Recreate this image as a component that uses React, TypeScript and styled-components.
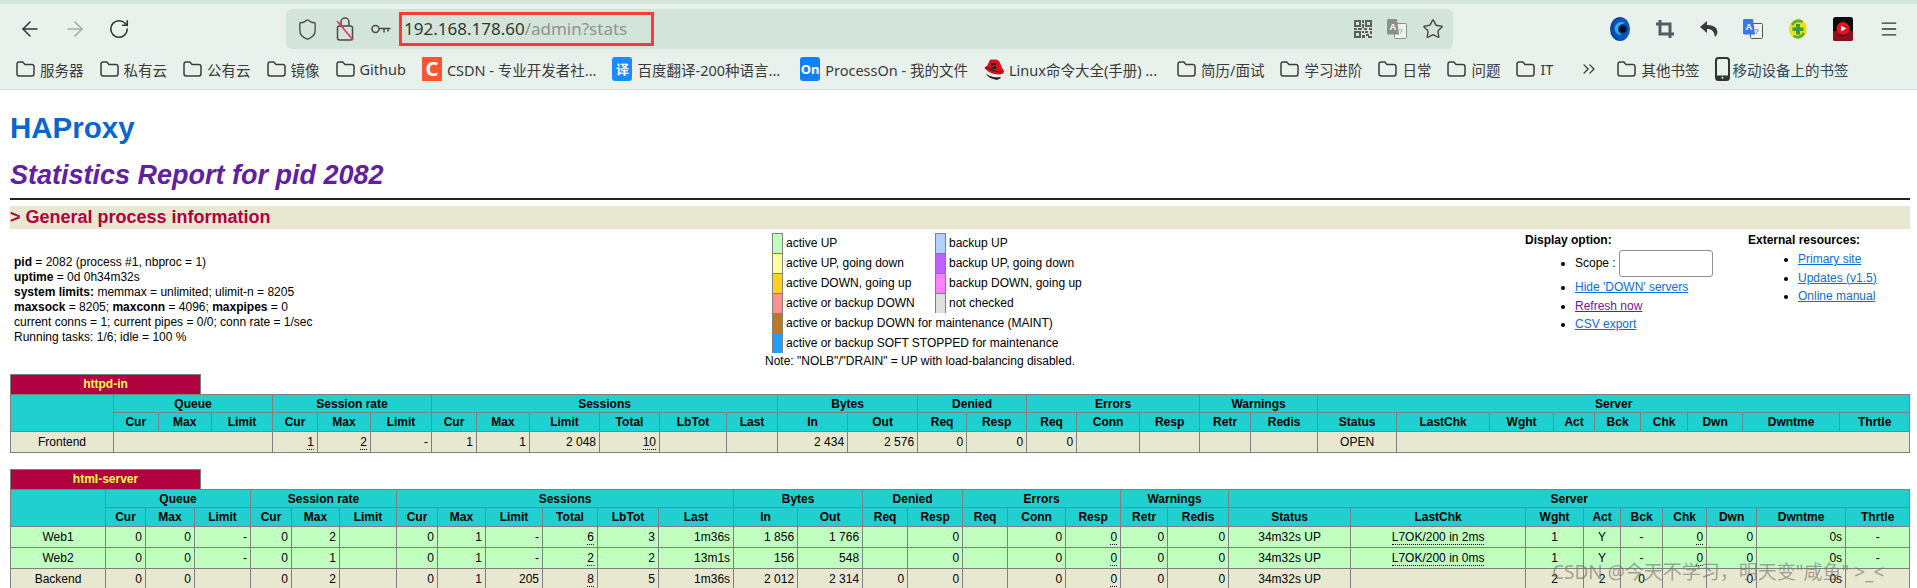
import { ReactNode } from "react";
import styled, { createGlobalStyle } from "styled-components";
import {
  ArrowLeft,
  ArrowRight,
  ChevronsRight,
  Menu,
  RotateCw,
  Shield,
  Star,
} from "lucide-react";

const GlobalStyle = createGlobalStyle`
  html, body {
    margin: 0;
    padding: 0;
    background: #fff;
    height: 588px;
    overflow: hidden;
  }
`;

type Cell = string | { t?: string; u?: boolean; c?: boolean; span?: number };

const groups: [string, number][] = [
  ["Queue", 3],
  ["Session rate", 3],
  ["Sessions", 6],
  ["Bytes", 2],
  ["Denied", 2],
  ["Errors", 3],
  ["Warnings", 2],
  ["Server", 9],
];

const subHeads = [
  "Cur", "Max", "Limit", "Cur", "Max", "Limit", "Cur", "Max", "Limit", "Total", "LbTot", "Last",
  "In", "Out", "Req", "Resp", "Req", "Conn", "Resp", "Retr", "Redis",
  "Status", "LastChk", "Wght", "Act", "Bck", "Chk", "Dwn", "Dwntme", "Thrtle",
];

const frontendEdges = [
  10.5, 113.5, 158, 211.5, 272.5, 317.5, 370.5, 431.5, 476.5, 529.5, 599.5, 659.5, 726.5, 777.5,
  847.5, 917.5, 966.5, 1026.5, 1076.5, 1139.5, 1199.5, 1250.5, 1317.5, 1396.5, 1489.5, 1553.5,
  1594.5, 1640.5, 1687.5, 1742.5, 1839.5, 1909.5,
];

const backendEdges = [
  10.5, 105.5, 145.5, 194.5, 250.5, 291.5, 339.5, 396.5, 437.5, 485.5, 542.5, 597.5, 658.5, 733.5,
  797.5, 862.5, 907.5, 962.5, 1007.5, 1065.5, 1120.5, 1167.5, 1228.5, 1350.5, 1525.5, 1583.5,
  1620.5, 1662.5, 1706.5, 1756.5, 1845.5, 1909.5,
];

const frontendRows: { kind: "front" | "active"; cells: Cell[] }[] = [
  {
    kind: "front",
    cells: [
      { t: "Frontend", c: true },
      { span: 3 },
      { t: "1", u: true }, { t: "2", u: true }, "-",
      "1", "1", "2 048", { t: "10", u: true }, "", "",
      "2 434", "2 576",
      "0", "0",
      "0", "", "",
      "", "",
      { t: "OPEN", c: true },
      { span: 8 },
    ],
  },
];

const backendRows: { kind: "front" | "active"; cells: Cell[] }[] = [
  {
    kind: "active",
    cells: [
      { t: "Web1", c: true },
      "0", "0", "-",
      "0", "2", "",
      "0", "1", "-", { t: "6", u: true }, "3", "1m36s",
      "1 856", "1 766",
      "", "0",
      "", "0", { t: "0", u: true },
      "0", "0",
      { t: "34m32s UP", c: true }, { t: "L7OK/200 in 2ms", c: true, u: true },
      { t: "1", c: true }, { t: "Y", c: true }, { t: "-", c: true },
      { t: "0", u: true }, "0", "0s", { t: "-", c: true },
    ],
  },
  {
    kind: "active",
    cells: [
      { t: "Web2", c: true },
      "0", "0", "-",
      "0", "1", "",
      "0", "1", "-", { t: "2", u: true }, "2", "13m1s",
      "156", "548",
      "", "0",
      "", "0", { t: "0", u: true },
      "0", "0",
      { t: "34m32s UP", c: true }, { t: "L7OK/200 in 0ms", c: true, u: true },
      { t: "1", c: true }, { t: "Y", c: true }, { t: "-", c: true },
      { t: "0", u: true }, "0", "0s", { t: "-", c: true },
    ],
  },
  {
    kind: "front",
    cells: [
      { t: "Backend", c: true },
      "0", "0", "",
      "0", "2", "",
      "0", "1", "205", { t: "8", u: true }, "5", "1m36s",
      "2 012", "2 314",
      "0", "0",
      "", "0", { t: "0", u: true },
      "0", "0",
      { t: "34m32s UP", c: true }, { t: "", c: true },
      { t: "2", c: true }, { t: "2", c: true }, { t: "0", c: true },
      "", "0", "0s", "",
    ],
  },
];

const legendLeft: [string, string][] = [
  ["#c0ffc0", "active UP"],
  ["#ffffa0", "active UP, going down"],
  ["#ffd020", "active DOWN, going up"],
  ["#ff9090", "active or backup DOWN"],
];

const legendRight: [string, string][] = [
  ["#b0d0ff", "backup UP"],
  ["#c060ff", "backup UP, going down"],
  ["#ff80ff", "backup DOWN, going up"],
  ["#e0e0e0", "not checked"],
];

const FolderIcon = () => (
  <svg width="19" height="18" viewBox="0 0 19 18" fill="none" stroke="#3c3c3c" strokeWidth="1.5">
    <path d="M1 4.2C1 2.9 1.9 2 3.2 2h3.6l2.2 2.4h6.8c1.3 0 2.2.9 2.2 2.2v7.2c0 1.3-.9 2.2-2.2 2.2H3.2C1.9 16 1 15.1 1 13.8z" />
  </svg>
);

const LockOff = () => (
  <svg width="18" height="26" viewBox="0 0 18 26" fill="none">
    <path d="M5 10V6a4 4 0 0 1 8 0v4" stroke="#4a4a4a" strokeWidth="1.5" />
    <rect x="1.5" y="10" width="15" height="14" rx="2" stroke="#4a4a4a" strokeWidth="1.5" />
    <path d="M1 5l16 19" stroke="#f0325a" strokeWidth="1.6" />
  </svg>
);

const KeyIcon = () => (
  <svg width="20" height="10" viewBox="0 0 20 10" fill="none" stroke="#4a4a4a" strokeWidth="1.5">
    <circle cx="4.5" cy="5" r="3.5" />
    <path d="M8 4.5h11.5M13 4.5v4M17 4.5v3" />
  </svg>
);

const QrIcon = () => (
  <svg width="18" height="18" viewBox="0 0 18 18" fill="#5a5f5c">
    <path fillRule="evenodd" d="M0 0h7v7H0zM2 2v3h3V2zM11 0h7v7h-7zM13 2v3h3V2zM0 11h7v7H0zM2 13v3h3v-3z" />
    <path d="M8 0h2v3H8zM8 4h2v4H8zM0 8h3v2H0zM4 8h4v2H4zM10 8h3v2h-3zM15 8h3v2h-3zM8 11h2v2H8zM11 11h3v2h-3zM16 11h2v3h-2zM8 15h3v3H8zM12 14h3v2h-3zM14 16h4v2h-4z" />
  </svg>
);

const TranslateIcon = ({ front, back }: { front: string; back: string }) => (
  <svg width="20" height="20" viewBox="0 0 20 20">
    <rect x="7.5" y="4.5" width="12" height="15" rx="1" fill="#eef2f0" stroke={back} />
    <text x="13.5" y="15" fontSize="8" fontFamily="Liberation Sans" fill={back} textAnchor="middle">
      ?
    </text>
    <path d="M1.5 0h8.5l2 15.5H1.5c-.8 0-1.5-.7-1.5-1.5V1.5C0 .7.7 0 1.5 0z" fill={front} />
    <text x="6" y="11" fontSize="9.5" fontWeight="700" fontFamily="Liberation Sans" fill="#fff" textAnchor="middle">
      A
    </text>
  </svg>
);

const SwirlIcon = () => (
  <svg width="20" height="24" viewBox="0 0 20 24">
    <defs>
      <radialGradient id="swirl" cx="60%" cy="50%" r="60%">
        <stop offset="0" stopColor="#02133a" />
        <stop offset="0.55" stopColor="#0a5fc4" />
        <stop offset="1" stopColor="#063a8c" />
      </radialGradient>
    </defs>
    <ellipse cx="10" cy="12" rx="10" ry="12" fill="url(#swirl)" />
    <path d="M15 6c-6-3-11 2-10 7 1 4 5 6 8 4-3 0-5-2-5-5s3-5 7-6z" fill="#3fa8ee" />
    <circle cx="13" cy="12" r="3.5" fill="#03112f" />
  </svg>
);

const CropIcon = () => (
  <svg width="18" height="18" viewBox="0 0 18 18" fill="none" stroke="#5b5866" strokeWidth="3">
    <path d="M4 0v14h14M0 4h14v14" />
  </svg>
);

const UndoIcon = () => (
  <svg width="18" height="18" viewBox="0 0 18 18">
    <path d="M7 1L0 7l7 6V9c4 0 7 1 8 8 3-3 3-6 1-9-2-2-5-3-9-3z" fill="#3a3a3a" />
  </svg>
);

const GuardIcon = () => (
  <svg width="18" height="20" viewBox="0 0 18 20">
    <ellipse cx="9" cy="10" rx="9" ry="10" fill="#e9e020" />
    <path d="M2 5a9 10 0 0 1 12-3l-1 2A7 8 0 0 0 4 7z" fill="#58b030" />
    <path d="M16 15a9 10 0 0 1-12 3l1-2a7 8 0 0 0 9-3z" fill="#58b030" />
    <path d="M7 5h4v3.500h3.500v3.500H11v3.500H7V12H3.500V8.500H7z" fill="#3c9a3c" />
  </svg>
);

const MusicIcon = () => (
  <svg width="20" height="24" viewBox="0 0 20 24">
    <rect width="20" height="24" rx="2.500" fill="#0b0b0b" />
    <path d="M0 14h5a5 5 0 0 0 10 0h5v7.500A2.500 2.500 0 0 1 17.500 24h-15A2.500 2.500 0 0 1 0 21.500z" fill="#8c0f1c" />
    <circle cx="10" cy="11.500" r="6.500" fill="#e8101e" />
    <path d="M8 8.500l5 3-5 3z" fill="#fff" />
  </svg>
);

const RedHatIcon = () => (
  <svg width="20" height="22" viewBox="0 0 20 22">
    <path d="M2 15c2 3 8 5 14 4l1 1-4 2c-5-1-10-3-11-7z" fill="#222" />
    <path d="M6 2c2-1 3 0 5-.5 3-.5 5 2 6 6 1 3 3 4 3 6s-2 3-5 3-9-1-12-4C1 11 0 10 1 9l2-1z" fill="#d6101c" />
    <path d="M2 9c3 3 8 4 14 5 1 0 2-1 1.500-2" stroke="#222" strokeWidth="1" fill="none" />
    <path d="M7 5h5v2H9v1h3v3H7V9h3V8H7z" fill="#222" />
  </svg>
);

const PhoneIcon = () => (
  <svg width="15" height="24" viewBox="0 0 15 24">
    <rect x="1" y="1" width="13" height="22" rx="2.500" fill="none" stroke="#333" strokeWidth="2" />
    <rect x="1" y="18.500" width="13" height="4.500" fill="#333" />
    <circle cx="7.500" cy="20.700" r="1" fill="#e8f1ec" />
  </svg>
);

const Statline = ({ children }: { children: ReactNode }) => <div>{children}</div>;

const StatsTable = ({
  edges,
  rows,
}: {
  edges: number[];
  rows: { kind: "front" | "active"; cells: Cell[] }[];
}) => (
  <Tbl>
    <colgroup>
      {edges.slice(1).map((edge, i) => (
        <col key={i} style={{ width: edge - edges[i] }} />
      ))}
    </colgroup>
    <thead>
      <GroupRow>
        <Th rowSpan={2} />
        {groups.map(([name, span]) => (
          <Th key={name} colSpan={span}>
            {name}
          </Th>
        ))}
      </GroupRow>
      <SubRow>
        {subHeads.map((name, i) => (
          <Th key={i}>{name}</Th>
        ))}
      </SubRow>
    </thead>
    <tbody>
      {rows.map((row, r) => (
        <DataRow key={r} $kind={row.kind}>
          {row.cells.map((cell, i) => {
            const c = typeof cell === "string" ? { t: cell } : cell;
            return (
              <Td key={i} colSpan={c.span} $center={c.c}>
                {c.u ? <Dotted>{c.t}</Dotted> : c.t}
              </Td>
            );
          })}
        </DataRow>
      ))}
    </tbody>
  </Tbl>
);

const Bookmark = ({ label }: { label: string }) => (
  <Mark>
    <FolderIcon />
    <span>{label}</span>
  </Mark>
);

export default function App() {
  return (
    <>
      <GlobalStyle />
      <Browser>
        <TopStrip />
        <Toolbar>
          <NavGroup>
            <ArrowLeft size={24} strokeWidth={1.5} color="#333" />
            <ArrowRight size={24} strokeWidth={1.5} color="#a5aaa7" />
            <RotateCw size={22} strokeWidth={1.7} color="#333" />
          </NavGroup>
          <UrlBar>
            <Shield size={23} strokeWidth={1.4} color="#4a4a4a" />
            <LockOff />
            <KeyIcon />
            <UrlBox>
              192.168.178.60<UrlRest>/admin?stats</UrlRest>
            </UrlBox>
            <UrlActions>
              <QrIcon />
              <TranslateIcon front="#8a918d" back="#8a918d" />
              <Star size={22} strokeWidth={1.5} color="#444" />
            </UrlActions>
          </UrlBar>
          <Extensions>
            <SwirlIcon />
            <CropIcon />
            <UndoIcon />
            <TranslateIcon front="#3b78e7" back="#555" />
            <GuardIcon />
            <MusicIcon />
            <Menu size={20} strokeWidth={1.6} color="#333" />
          </Extensions>
        </Toolbar>
        <BookmarkBar>
          <Bookmark label="服务器" />
          <Bookmark label="私有云" />
          <Bookmark label="公有云" />
          <Bookmark label="镜像" />
          <Bookmark label="Github" />
          <Mark>
            <SiteBadge $bg="#fc5531" $square>C</SiteBadge>
            <span>CSDN - 专业开发者社...</span>
          </Mark>
          <Mark>
            <SiteBadge $bg="#1a8cff">译</SiteBadge>
            <span>百度翻译-200种语言...</span>
          </Mark>
          <Mark $wide>
            <SiteBadge $bg="#0f80f5">On</SiteBadge>
            <span>ProcessOn - 我的文件</span>
          </Mark>
          <Mark>
            <RedHatIcon />
            <span>Linux命令大全(手册) ...</span>
          </Mark>
          <Mark $wide>
            <FolderIcon />
            <span>简历/面试</span>
          </Mark>
          <Bookmark label="学习进阶" />
          <Bookmark label="日常" />
          <Bookmark label="问题" />
          <Bookmark label="IT" />
          <Overflow>
            <ChevronsRight size={20} strokeWidth={1.5} color="#333" />
          </Overflow>
          <Bookmark label="其他书签" />
          <MobileMark>
            <PhoneIcon />
            <span>移动设备上的书签</span>
          </MobileMark>
        </BookmarkBar>
      </Browser>

      <Page>
        <Brand>HAProxy</Brand>
        <Report>Statistics Report for pid 2082</Report>
        <Rule />
        <SectionTitle>&gt; General process information</SectionTitle>

        <InfoRow>
          <ProcessInfo>
            <Statline><b>pid</b> = 2082 (process #1, nbproc = 1)</Statline>
            <Statline><b>uptime</b> = 0d 0h34m32s</Statline>
            <Statline><b>system limits:</b> memmax = unlimited; ulimit-n = 8205</Statline>
            <Statline><b>maxsock</b> = 8205; <b>maxconn</b> = 4096; <b>maxpipes</b> = 0</Statline>
            <Statline>current conns = 1; current pipes = 0/0; conn rate = 1/sec</Statline>
            <Statline>Running tasks: 1/6; idle = 100 %</Statline>
          </ProcessInfo>

          <LegendBlock>
            <LegendGrid>
              {legendLeft.map(([color, label], i) => (
                <LegendPair key={label}>
                  <Swatch $color={color} />
                  <LegendText>{label}</LegendText>
                  <Swatch $color={legendRight[i][0]} />
                  <LegendText>{legendRight[i][1]}</LegendText>
                </LegendPair>
              ))}
              <LegendPair>
                <Swatch $color="#c07820" />
                <LegendWide>active or backup DOWN for maintenance (MAINT)</LegendWide>
              </LegendPair>
              <LegendPair>
                <Swatch $color="#20a0ff" />
                <LegendWide>active or backup SOFT STOPPED for maintenance</LegendWide>
              </LegendPair>
            </LegendGrid>
            <Note>Note: "NOLB"/"DRAIN" = UP with load-balancing disabled.</Note>
          </LegendBlock>

          <OptionBlock>
            <b>Display option:</b>
            <OptionList>
              <ScopeItem>
                Scope : <ScopeInput />
              </ScopeItem>
              <li><Link>Hide 'DOWN' servers</Link></li>
              <li><Link $visited>Refresh now</Link></li>
              <li><Link>CSV export</Link></li>
            </OptionList>
          </OptionBlock>

          <ResourceBlock>
            <b>External resources:</b>
            <ResourceList>
              <li><Link>Primary site</Link></li>
              <li><Link>Updates (v1.5)</Link></li>
              <li><Link>Online manual</Link></li>
            </ResourceList>
          </ResourceBlock>
        </InfoRow>

        <Proxy>
          <ProxyName>httpd-in</ProxyName>
          <StatsTable edges={frontendEdges} rows={frontendRows} />
        </Proxy>
        <Proxy>
          <ProxyName>html-server</ProxyName>
          <StatsTable edges={backendEdges} rows={backendRows} />
        </Proxy>
      </Page>

      <Watermark>CSDN @今天不学习，明天变"咸鱼" &gt;_&lt;</Watermark>
    </>
  );
}

const Browser = styled.div`
  background: #e8f1ec;
  border-bottom: 1px solid #d4e0da;
  height: 90px;
  box-sizing: border-box;
  font-family: "Noto Sans", "Noto Sans CJK SC", sans-serif;
`;

const TopStrip = styled.div`
  height: 4px;
  background: #d4e5dc;
`;

const Toolbar = styled.div`
  display: flex;
  align-items: center;
  height: 40px;
  margin-top: 5px;
`;

const NavGroup = styled.div`
  width: 286px;
  padding-left: 18px;
  box-sizing: border-box;
  display: flex;
  align-items: center;
  gap: 21px;
`;

const UrlBar = styled.div`
  width: 1167px;
  height: 40px;
  background: #d3e4da;
  border-radius: 6px;
  display: flex;
  align-items: center;
  gap: 17px;
  padding-left: 10px;
  padding-right: 9px;
  box-sizing: border-box;
`;

const UrlBox = styled.div`
  border: 3px solid #f93a3a;
  box-sizing: border-box;
  width: 255px;
  height: 34px;
  margin-left: -9px;
  padding-left: 2px;
  font-size: 17px;
  line-height: 28px;
  color: #2f3a35;
  white-space: nowrap;
  overflow: hidden;
`;

const UrlRest = styled.span`
  color: #8b9590;
`;

const UrlActions = styled.div`
  margin-left: auto;
  display: flex;
  align-items: center;
  gap: 15px;
`;

const Extensions = styled.div`
  flex: 1;
  display: flex;
  align-items: center;
  justify-content: space-between;
  padding: 0 18px 0 157px;
`;

const BookmarkBar = styled.div`
  display: flex;
  align-items: center;
  height: 40px;
  padding-left: 16px;
  gap: 16px;
  font-size: 14.500px;
  color: #3a3a3a;
  white-space: nowrap;
`;

const Mark = styled.div<{ $wide?: boolean }>`
  display: flex;
  align-items: center;
  gap: 5px;
  margin-left: ${(p) => (p.$wide ? "4px" : "0")};
`;

const MobileMark = styled(Mark)`
  gap: 2px;
  color: #2b4a5a;
`;

const Overflow = styled.div`
  display: flex;
  margin: 0 2px 0 10px;
`;

const SiteBadge = styled.span<{ $bg: string; $square?: boolean }>`
  width: 20px;
  height: 24px;
  border-radius: ${(p) => (p.$square ? "0" : "3px")};
  background: ${(p) => p.$bg};
  color: #fff;
  font-size: ${(p) => (p.$square ? "20px" : "13px")};
  font-weight: 700;
  line-height: 24px;
  text-align: center;
`;

const Page = styled.div`
  padding: 0 7px 0 10px;
  font: 12px "Liberation Sans", Arial, sans-serif;
  color: #000;
`;

const Brand = styled.div`
  color: #0a66cc;
  font-size: 29.500px;
  font-weight: 700;
  line-height: 34px;
  padding-top: 21px;
  margin-left: 0;
`;

const Report = styled.div`
  color: #60209f;
  font-size: 27px;
  font-weight: 700;
  font-style: italic;
  line-height: 32px;
  margin-top: 14px;
`;

const Rule = styled.div`
  height: 2px;
  background: #222;
  margin-top: 7px;
`;

const SectionTitle = styled.div`
  background: #e8e8d0;
  color: #b00040;
  font-size: 18px;
  font-weight: 700;
  height: 23px;
  line-height: 23px;
  margin-top: 6px;
`;

const InfoRow = styled.div`
  display: grid;
  grid-template-columns: 755px 760px 223px 1fr;
  padding-top: 4px;
  height: 141px;
`;

const ProcessInfo = styled.div`
  padding: 22px 0 0 4px;
  line-height: 15px;
`;

const LegendBlock = styled.div`
  display: flex;
  flex-direction: column;
`;

const LegendGrid = styled.div`
  margin-left: 7px;
  display: flex;
  flex-direction: column;
`;

const LegendPair = styled.div`
  display: grid;
  grid-template-columns: 11px 152px 11px 1fr;
  height: 20px;
  white-space: nowrap;
`;

const Swatch = styled.div<{ $color: string }>`
  background: ${(p) => p.$color};
  border: 1px solid gray;
  border-bottom: none;
`;

const LegendText = styled.div`
  padding-left: 3px;
  line-height: 20px;
`;

const LegendWide = styled(LegendText)`
  grid-column: 2 / 5;
`;

const Note = styled.div`
  line-height: 15px;
  margin-top: 1px;
`;

const OptionBlock = styled.div`
  line-height: 15px;
`;

const ResourceBlock = styled.div`
  line-height: 15px;
`;

const OptionList = styled.ul`
  margin: 0;
  padding-left: 50px;
  list-style: disc;

  li {
    line-height: 18.500px;
  }
`;

const ResourceList = styled.ul`
  margin: 2px 0 0;
  padding-left: 50px;

  li {
    line-height: 18.500px;
  }
`;

const ScopeItem = styled.li`
  height: 30px;
  line-height: 30px !important;
`;

const ScopeInput = styled.input.attrs({ type: "text" })`
  width: 94px;
  height: 27px;
  box-sizing: border-box;
  border: 1px solid #8f8f9d;
  border-radius: 3px;
  background: #fff;
  padding: 0;
  vertical-align: middle;
`;

const Link = styled.a<{ $visited?: boolean }>`
  color: ${(p) => (p.$visited ? "#6a1b9a" : "#0a6fd6")};
  text-decoration: underline;
`;

const Proxy = styled.section`
  margin-bottom: 16px;
`;

const ProxyName = styled.div`
  width: 191px;
  height: 21px;
  box-sizing: border-box;
  margin-bottom: -1px;
  background: #b00040;
  border: 1px solid gray;
  color: #ffff40;
  font-weight: 700;
  line-height: 19px;
  text-align: center;
`;

const Tbl = styled.table`
  table-layout: fixed;
  width: 1899px;
  border-collapse: collapse;
  font: 12px "Liberation Sans", Arial, sans-serif;
`;

const GroupRow = styled.tr`
  height: 18px;
  background: #20d0d0;
`;

const SubRow = styled.tr`
  height: 19px;
  background: #20d0d0;
`;

const Th = styled.th`
  border: 1px solid gray;
  padding: 0 3px;
  font-weight: 700;
  text-align: center;
  white-space: nowrap;
`;

const DataRow = styled.tr<{ $kind: "front" | "active" }>`
  height: 21px;
  background: ${(p) => (p.$kind === "active" ? "#c0ffc0" : "#e8e8d0")};
`;

const Td = styled.td<{ $center?: boolean }>`
  border: 1px solid gray;
  padding: 0 3px;
  text-align: ${(p) => (p.$center ? "center" : "right")};
  white-space: nowrap;
`;

const Dotted = styled.u`
  text-decoration: none;
  border-bottom: 1px dotted #000;
`;

const Watermark = styled.div`
  position: absolute;
  left: 1552px;
  top: 557px;
  font: 19px "Noto Sans", "Noto Sans CJK SC", sans-serif;
  color: rgba(110, 110, 110, 0.6);
  white-space: nowrap;
`;
